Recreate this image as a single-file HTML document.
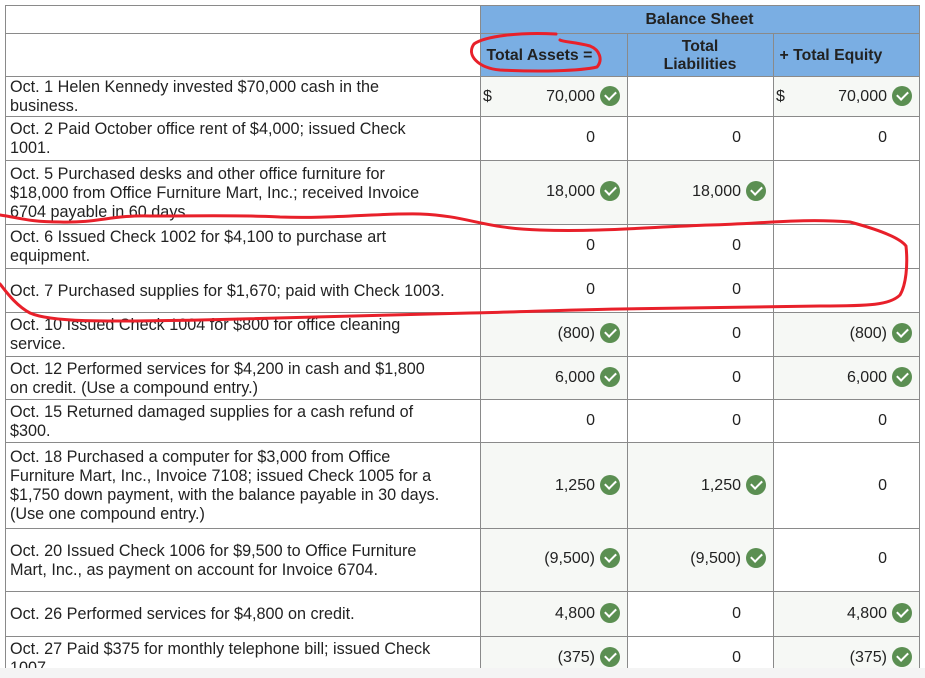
<!DOCTYPE html>
<html><head><meta charset="utf-8"><style>
html,body{margin:0;width:925px;height:678px;overflow:hidden}
body{background:#fff;position:relative;font-family:"Liberation Sans",Arial,sans-serif;color:#222}
.c{position:absolute;box-sizing:border-box;border:1px solid #8a8a8a;margin:-0.5px}
.t{position:absolute;font-size:16.2px;line-height:19px;left:10px;width:465px;color:#222;display:flex;align-items:center}
.n{position:absolute;font-size:16px;line-height:20px;text-align:right}
.h{background:#7aaee3;font-weight:bold;font-size:15.8px;color:#222}
.g{background:#f6f8f5}
.k{position:absolute;width:20px;height:20px;border-radius:50%;background:#5b8f52}
.k:after{content:"";position:absolute;left:5px;top:5px;width:9px;height:5px;border-left:2.5px solid #fff;border-bottom:2.5px solid #fff;transform:rotate(-45deg)}
</style></head><body>
<div id="grid"></div>
<script>
var rows=[76,116,160,224,268,312,356,399,442,528,591,636,668];
var cols=[5,480,627,773,919];
var txt=["Oct. 1 Helen Kennedy invested $70,000 cash in the<br>business.","Oct. 2 Paid October office rent of $4,000; issued Check<br>1001.","Oct. 5 Purchased desks and other office furniture for<br>$18,000 from Office Furniture Mart, Inc.; received Invoice<br>6704 payable in 60 days.","Oct. 6 Issued Check 1002 for $4,100 to purchase art<br>equipment.","Oct. 7 Purchased supplies for $1,670; paid with Check 1003.","Oct. 10 Issued Check 1004 for $800 for office cleaning<br>service.","Oct. 12 Performed services for $4,200 in cash and $1,800<br>on credit. (Use a compound entry.)","Oct. 15 Returned damaged supplies for a cash refund of<br>$300.","Oct. 18 Purchased a computer for $3,000 from Office<br>Furniture Mart, Inc., Invoice 7108; issued Check 1005 for a<br>$1,750 down payment, with the balance payable in 30 days.<br>(Use one compound entry.)","Oct. 20 Issued Check 1006 for $9,500 to Office Furniture<br>Mart, Inc., as payment on account for Invoice 6704.","Oct. 26 Performed services for $4,800 on credit.","Oct. 27 Paid $375 for monthly telephone bill; issued Check<br>1007."];
var vals=[[["70,000",1,1],["",0],["70,000",1,1]],[["0"],["0"],["0"]],[["18,000",1],["18,000",1],[""]],[["0"],["0"],[""]],[["0"],["0"],[""]],[["(800)",1],["0"],["(800)",1]],[["6,000",1],["0"],["6,000",1]],[["0"],["0"],["0"]],[["1,250",1],["1,250",1],["0"]],[["(9,500)",1],["(9,500)",1],["0"]],[["4,800",1],["0"],["4,800",1]],[["(375)",1],["0"],["(375)",1]]];
var vc=[97,138,192,246,290,334,378,421,486,559,614,658];
var h='';
h+='<div class="c" style="left:5px;top:5px;width:476px;height:29px"></div>';
h+='<div class="c" style="left:5px;top:33px;width:476px;height:44px"></div>';
h+='<div class="c h" style="left:480px;top:5px;width:440px;height:29px;text-align:center;line-height:28px">Balance Sheet</div>';
h+='<div class="c h" style="left:480px;top:33px;width:148px;height:44px;padding:13px 0 0 6px">Total Assets =</div>';
h+='<div class="c h" style="left:627px;top:33px;width:147px;height:44px;text-align:center;line-height:18px;padding-top:4px">Total<br>Liabilities</div>';
h+='<div class="c h" style="left:773px;top:33px;width:147px;height:44px;padding:13px 0 0 6px">+ Total Equity</div>';
for(var i=0;i<12;i++){var t=rows[i],b=rows[i+1],last=(i==11),hh=b-t+(last?0:1);
var bs=last?'border-bottom:none;':'';
h+='<div class="c" style="left:5px;top:'+t+'px;width:476px;height:'+hh+'px;'+bs+'"></div>';
var tt=last?t+3:t+1, th=last?40:b-t;
h+='<div class="t" style="top:'+tt+'px;height:'+th+'px"><div>'+txt[i]+'</div></div>';
for(var j=0;j<3;j++){var v=vals[i][j],L=cols[j+1],R=cols[j+2];
h+='<div class="c'+(v[1]?' g':'')+'" style="left:'+L+'px;top:'+t+'px;width:'+(R-L+1)+'px;height:'+hh+'px;'+bs+'"></div>';
var cy=vc[i];
if(v[2])h+='<div class="n" style="left:'+(L+3)+'px;top:'+(cy-10)+'px">$</div>';
h+='<div class="n" style="right:'+(925-(R-32))+'px;top:'+(cy-10)+'px">'+v[0]+'</div>';
if(v[1])h+='<div class="k" style="left:'+(R-27)+'px;top:'+(cy-11)+'px"></div>';}}
h+='<div style="position:absolute;left:0;top:668px;width:925px;height:10px;background:#f4f4f4"></div>';
document.getElementById('grid').innerHTML=h;
</script>
<svg style="position:absolute;left:0;top:0" width="925" height="678" fill="none" stroke="#e8202a" stroke-width="3" stroke-linejoin="round" stroke-linecap="round">
<path d="M556 34 C520 32 485 36 474 44 C466 55 478 68 500 70 C540 72 580 71 597 67 C603 60 600 50 590 46 C575 42 563 42 560 40"/>
<path d="M0 215 C20 218 30 222 60 222 C100 223 110 215 150 216 C200 216 250 215 280 217 C330 219 380 213 420 214 C470 216 480 228 540 230 C600 232 650 227 710 225 C760 224 800 218 850 222 C880 230 900 238 906 246 C908 265 906 285 900 295 C890 305 870 306 820 306 C760 307 700 308 620 309 C560 310 520 312 470 313 C400 314 300 318 200 320 C100 322 50 322 30 313 C15 305 5 290 0 284"/>
</svg>
</body></html>
